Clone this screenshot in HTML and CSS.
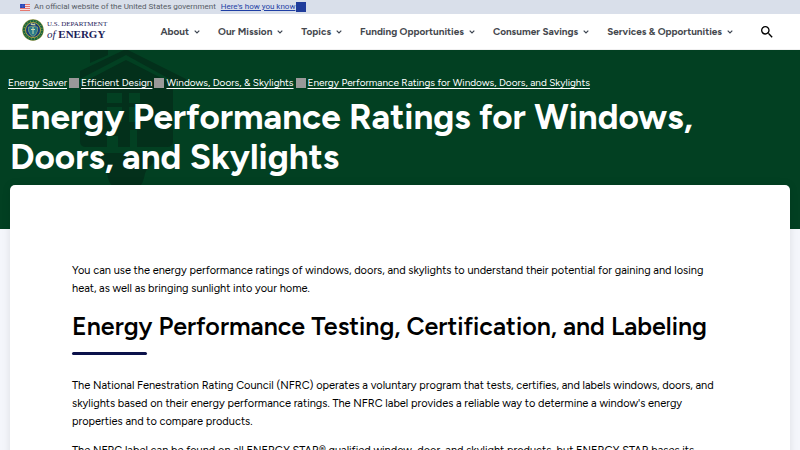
FILE: index.html
```html
<!DOCTYPE html>
<html lang="en">
<head>
<meta charset="utf-8">
<meta name="viewport" content="width=device-width, initial-scale=1">
<title>Energy Performance Ratings for Windows, Doors, and Skylights</title>
<link rel="stylesheet" href="styles.css">
</head>
<body>
<div class="gov-banner">
  <svg class="flag" viewBox="0 0 20 14" aria-hidden="true"><path fill="#f8dfe0" d="M0 0h20v14H0z"/><path stroke="#e5776f" stroke-width="2" d="M0 1h20M0 5h20M0 9h20M0 13h20"/><path fill="#2342b5" d="M0 0h10v8H0z"/><path stroke="#a8b5e8" stroke-width="1" stroke-dasharray="1 2" d="M1 2h8M2 4h8M1 6h8"/></svg>
  <span>An official website of the United States government</span>
  <button class="banner-toggle" type="button"><span>Here's how you know</span></button>
</div>
<header class="site-header">
  <a class="logo" href="#" aria-label="U.S. Department of Energy">
    <svg class="seal" viewBox="0 0 44 44" aria-hidden="true">
      <circle cx="22" cy="22" r="21.5" fill="#8f8f3a"/>
      <circle cx="22" cy="22" r="18" fill="none" stroke="#17633f" stroke-width="5"/>
      <circle cx="22" cy="22" r="18" fill="none" stroke="#a3b04e" stroke-width="2" stroke-dasharray="2 4"/>
      <circle cx="22" cy="22" r="15" fill="#163f7a" stroke="#c7b63e" stroke-width="1.5"/>
      <path fill="#287a8b" stroke="#c9c46a" stroke-width="1" d="M13 16q9-3 18 0v8q-2 8-9 11-7-3-9-11z"/>
      <path fill="#c3cfa2" d="M17 12l2-4 3 2 4-1 1 4z"/>
      <path stroke="#c9dcae" stroke-width="2" fill="none" d="M22 16v14M18 21h8"/>
    </svg>
    <span class="wordmark"><span class="dept">U.S. DEPARTMENT</span><span class="energy"><i>of</i> ENERGY</span></span>
  </a>
  <nav class="main-nav" aria-label="Main">
    <button type="button">About<svg viewBox="0 0 6 4"><path d="M.7.7 3 3 5.300.7"/></svg></button>
    <button type="button">Our Mission<svg viewBox="0 0 6 4"><path d="M.7.7 3 3 5.300.7"/></svg></button>
    <button type="button">Topics<svg viewBox="0 0 6 4"><path d="M.7.7 3 3 5.300.7"/></svg></button>
    <button type="button">Funding Opportunities<svg viewBox="0 0 6 4"><path d="M.7.7 3 3 5.300.7"/></svg></button>
    <button type="button">Consumer Savings<svg viewBox="0 0 6 4"><path d="M.7.7 3 3 5.300.7"/></svg></button>
    <button type="button">Services &amp; Opportunities<svg viewBox="0 0 6 4"><path d="M.7.7 3 3 5.300.7"/></svg></button>
  </nav>
  <button class="search" type="button" aria-label="Search"><svg viewBox="3 3 18 18"><path d="M15.500 14h-.79l-.28-.27A6.470 6.470 0 0 0 16 9.500 6.500 6.500 0 1 0 9.500 16c1.610 0 3.090-.59 4.230-1.570l.27.28v.79l5 4.990L20.490 19l-4.990-5zm-6 0C7.010 14 5 11.990 5 9.500S7.010 5 9.500 5 14 7.010 14 9.500 11.990 14 9.500 14z"/></svg></button>
</header>
<section class="hero">
  <svg class="hero-mark" viewBox="0 0 108 136" aria-hidden="true">
    <path d="M12 0h18v5L12 13zM46 0h4l58 29v9L48 5 2 29V21z"/>
    <path fill-rule="evenodd" d="M48 10L95 34v57q0 6-6 6H8q-6 0-6-6V34zM29 43v10h15V43zm22 0v10h11V43zM29 57v15h15V57zm22 0v15h11V57zM29 86v11h11V86zm23-6v17h7V80z"/>
    <path d="M19 103h57v6q0 4-4 7-5 4-6 12-1 5-4 8H35q-4-3-5-8-1-8-6-12-5-3-5-7z"/>
  </svg>
  <nav class="crumbs" aria-label="Breadcrumb">
    <a href="#">Energy Saver</a><i></i><a href="#">Efficient Design</a><i></i><a href="#">Windows, Doors, &amp; Skylights</a><i></i><a href="#">Energy Performance Ratings for Windows, Doors, and Skylights</a>
  </nav>
  <h1>Energy Performance Ratings for Windows, Doors, and Skylights</h1>
</section>
<main class="card">
  <p>You can use the energy performance ratings of windows, doors, and skylights to understand their potential for gaining and losing heat, as well as bringing sunlight into your home.</p>
  <h2>Energy Performance Testing, Certification, and Labeling</h2>
  <p>The National Fenestration Rating Council (NFRC) operates a voluntary program that tests, certifies, and labels windows, doors, and skylights based on their energy performance ratings. The NFRC label provides a reliable way to determine a window's energy properties and to compare products.</p>
  <p>The NFRC label can be found on all ENERGY STAR® qualified window, door, and skylight products, but ENERGY STAR bases its</p>
</main>
</body>
</html>
```
FILE: styles.css
```css
* { box-sizing: border-box; }
body {
  margin: 0;
  background: #f4f6fb;
  color: #000;
  font-family: Figtree, Inter, sans-serif;
  font-size: 11px;
  line-height: 18px;
}
button { border: 0; padding: 0; background: none; font: inherit; color: inherit; cursor: pointer; }
.gov-banner {
  display: flex;
  align-items: center;
  height: 14px;
  padding: 0 20px;
  background: #d9dfea;
  color: #565c65;
  font-family: Roboto, sans-serif;
  font-size: 8px;
  line-height: 14px;
}
.flag { width: 10px; height: 7px; margin-right: 4px; }
.banner-toggle { display: flex; align-items: center; gap: 1px; margin-left: 5px; color: #1f3fa5; text-decoration: underline; }
.banner-toggle::after { content: ""; width: 10px; height: 10px; background: #203d9b; }
.site-header {
  display: flex;
  align-items: center;
  height: 36px;
  padding: 0 27px 0 22px;
  background: #fff;
  border-bottom: 1px solid #f0f0f0;
}
.logo { display: flex; align-items: center; gap: 3px; margin: 0 auto 4px 0; color: #1c2158; text-decoration: none; }
.seal { width: 22px; height: 22px; }
.wordmark { display: flex; flex-direction: column; font-family: "Liberation Serif", serif; font-weight: bold; white-space: nowrap; }
.dept { font-size: 7px; line-height: 8px; font-weight: normal; }
.energy { font-size: 11px; line-height: 12px; }
.energy i { font-weight: normal; }
.main-nav { display: flex; gap: 18px; color: #45484e; font-size: 10px; font-weight: 700; white-space: nowrap; }
.main-nav button { display: flex; align-items: center; gap: 5px; }
.main-nav svg { width: 6px; height: 4px; fill: none; stroke: #3d4551; stroke-width: 1.200; }
.search { margin-left: 28px; }
.search svg { display: block; width: 12px; height: 12px; }
.hero { position: relative; min-height: 179px; padding: 24px 8px 0; background: #024022; color: #fff; }
.hero-mark { position: absolute; left: 78px; top: 0; width: 108px; height: 136px; fill: #03301b; }
.crumbs { position: relative; display: flex; align-items: center; gap: 2px; height: 18px; font-size: 10px; white-space: nowrap; }
.crumbs a { color: #fff; text-underline-offset: 2px; }
.crumbs i { width: 10px; height: 10px; background: #999; }
h1 { position: relative; margin: 5px 2px 0; font-size: 35px; line-height: 40px; font-weight: 700; }
.card {
  position: relative;
  margin: -44px 10px 0;
  padding: 77px 62px 0;
  background: #fff;
  border-radius: 5px;
  box-shadow: 0 0 8px rgba(0, 0, 0, .1);
}
p { margin: 0 0 11px; }
h2 { margin: 13px 0 22px; font-size: 25px; line-height: 30px; font-weight: 600; }
h2::after { content: ""; display: block; width: 75px; height: 3px; margin-top: 11px; border-radius: 2px; background: #0b114a; }
```
